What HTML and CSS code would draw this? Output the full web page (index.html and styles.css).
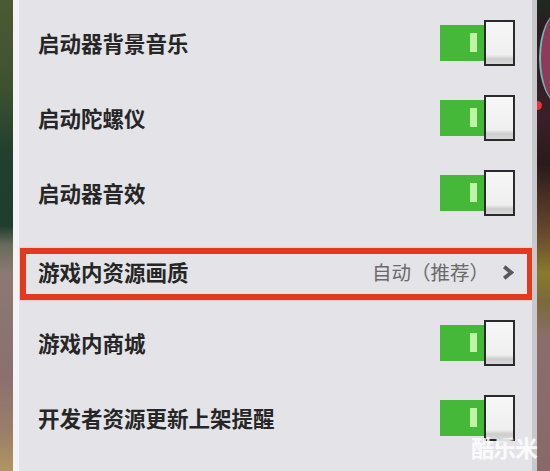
FILE: index.html
```html
<!DOCTYPE html>
<html lang="zh-CN">
<head>
<meta charset="utf-8">
<title>设置</title>
<link rel="stylesheet" href="styles.css">
</head>
<body>
<div class="screen">
  <div class="bg-left"></div>
  <div class="edge-left"></div>
  <main class="panel">
    <div class="row">
      <span class="label">启动器背景音乐</span>
      <div class="switch"><span class="track"><span class="tick"></span></span><span class="knob"></span></div>
    </div>
    <div class="row">
      <span class="label">启动陀螺仪</span>
      <div class="switch"><span class="track"><span class="tick"></span></span><span class="knob"></span></div>
    </div>
    <div class="row">
      <span class="label">启动器音效</span>
      <div class="switch"><span class="track"><span class="tick"></span></span><span class="knob"></span></div>
    </div>
    <div class="row row-hl">
      <div class="hl-box">
        <span class="label">游戏内资源画质</span>
        <span class="value">自动（推荐）<svg class="chev" width="12" height="15" viewBox="0 0 12 15"><polyline points="2.2,1.8 9.2,7.5 2.2,13.2" fill="none" stroke="#595959" stroke-width="3.8" stroke-linejoin="miter"/></svg></span>
      </div>
    </div>
    <div class="row">
      <span class="label">游戏内商城</span>
      <div class="switch"><span class="track"><span class="tick"></span></span><span class="knob"></span></div>
    </div>
    <div class="row">
      <span class="label">开发者资源更新上架提醒</span>
      <div class="switch"><span class="track"><span class="tick"></span></span><span class="knob"></span></div>
    </div>
  </main>
  <div class="edge-right"></div>
  <div class="bg-right"><span class="orb"></span><span class="dot"></span></div>
  <span class="watermark">酷乐米</span>
</div>
</body>
</html>
```
FILE: styles.css
```css
html, body {
  margin: 0;
  padding: 0;
}
body {
  width: 550px;
  height: 471px;
  overflow: hidden;
  font-family: "Noto Sans CJK SC", "Noto Sans", sans-serif;
}
.screen {
  position: relative;
  display: flex;
  width: 550px;
  height: 471px;
}
.bg-left {
  width: 13px;
  background: linear-gradient(180deg, #4b5a34 0%, #3f5230 18%, #22402f 32%, #1f3d2f 48%, #6a6a5a 52%, #8a7a72 58%, #8a7070 80%, #9a8068 92%, #b09562 100%);
}
.edge-left {
  width: 6px;
  background: #f3f3f5;
}
.panel {
  width: 513px;
  box-sizing: border-box;
  background: #e3e3e8;
  padding-top: 5px;
  display: flex;
  flex-direction: column;
}
.edge-right {
  width: 5px;
  background: #c9c9cd;
}
.bg-right {
  position: relative;
  flex: 1;
  overflow: hidden;
  background: linear-gradient(180deg, #1e2a20 0%, #2a1e22 5%, #3a1f28 25%, #2a1a1a 35%, #4a3024 42%, #6b4a2e 50%, #8a7a2c 58%, #7a6a3a 64%, #8a6e6c 72%, #8a6868 100%);
}
.orb {
  position: absolute;
  left: 2px;
  top: 12px;
  width: 40px;
  height: 92px;
  border-radius: 50%;
  background: #8e3a58;
  border-left: 2px solid #6fb8b8;
}
.dot {
  position: absolute;
  left: -4px;
  top: 101px;
  width: 9px;
  height: 9px;
  border-radius: 50%;
  background: #e8343e;
}
.row {
  height: 75px;
  box-sizing: border-box;
  flex: none;
  display: flex;
  align-items: center;
  justify-content: space-between;
  padding: 0 17px 0 19px;
}
.label {
  font-size: 21.5px;
  font-weight: 700;
  color: #262626;
  line-height: 1;
}
.switch {
  display: flex;
  align-items: center;
}
.track {
  width: 45px;
  height: 36px;
  box-sizing: border-box;
  background: #45b83a;
  display: flex;
  align-items: center;
  justify-content: flex-end;
  padding-right: 8px;
}
.tick {
  width: 7px;
  height: 19px;
  background: #bff3a6;
}
.knob {
  width: 31px;
  height: 46px;
  box-sizing: border-box;
  margin-left: -1px;
  border: 2.5px solid #2b2b2b;
  background: linear-gradient(180deg, #f7f7f7 0%, #efefef 78%, #cdcdcd 88%, #d8d8d8 100%);
}
.row-hl {
  padding: 18px 0 5px 1px;
  margin-right: -1px;
  align-items: stretch;
}
.hl-box {
  flex: 1;
  box-sizing: border-box;
  height: 52px;
  border: 6px solid #e2391f;
  box-shadow: 0 0 2px rgba(240, 120, 100, 0.5);
  display: flex;
  align-items: center;
  justify-content: space-between;
  padding: 0 13px 5px 12px;
}
.value {
  display: flex;
  align-items: center;
  font-size: 19.5px;
  color: #6a6a6a;
  line-height: 1;
}
.chev {
  margin-left: 13px;
  margin-top: 2px;
}
.watermark {
  position: absolute;
  left: 471px;
  top: 436px;
  font-size: 23px;
  font-weight: 700;
  color: rgba(255, 255, 255, 0.85);
  line-height: 1;
  letter-spacing: -1px;
}
```
